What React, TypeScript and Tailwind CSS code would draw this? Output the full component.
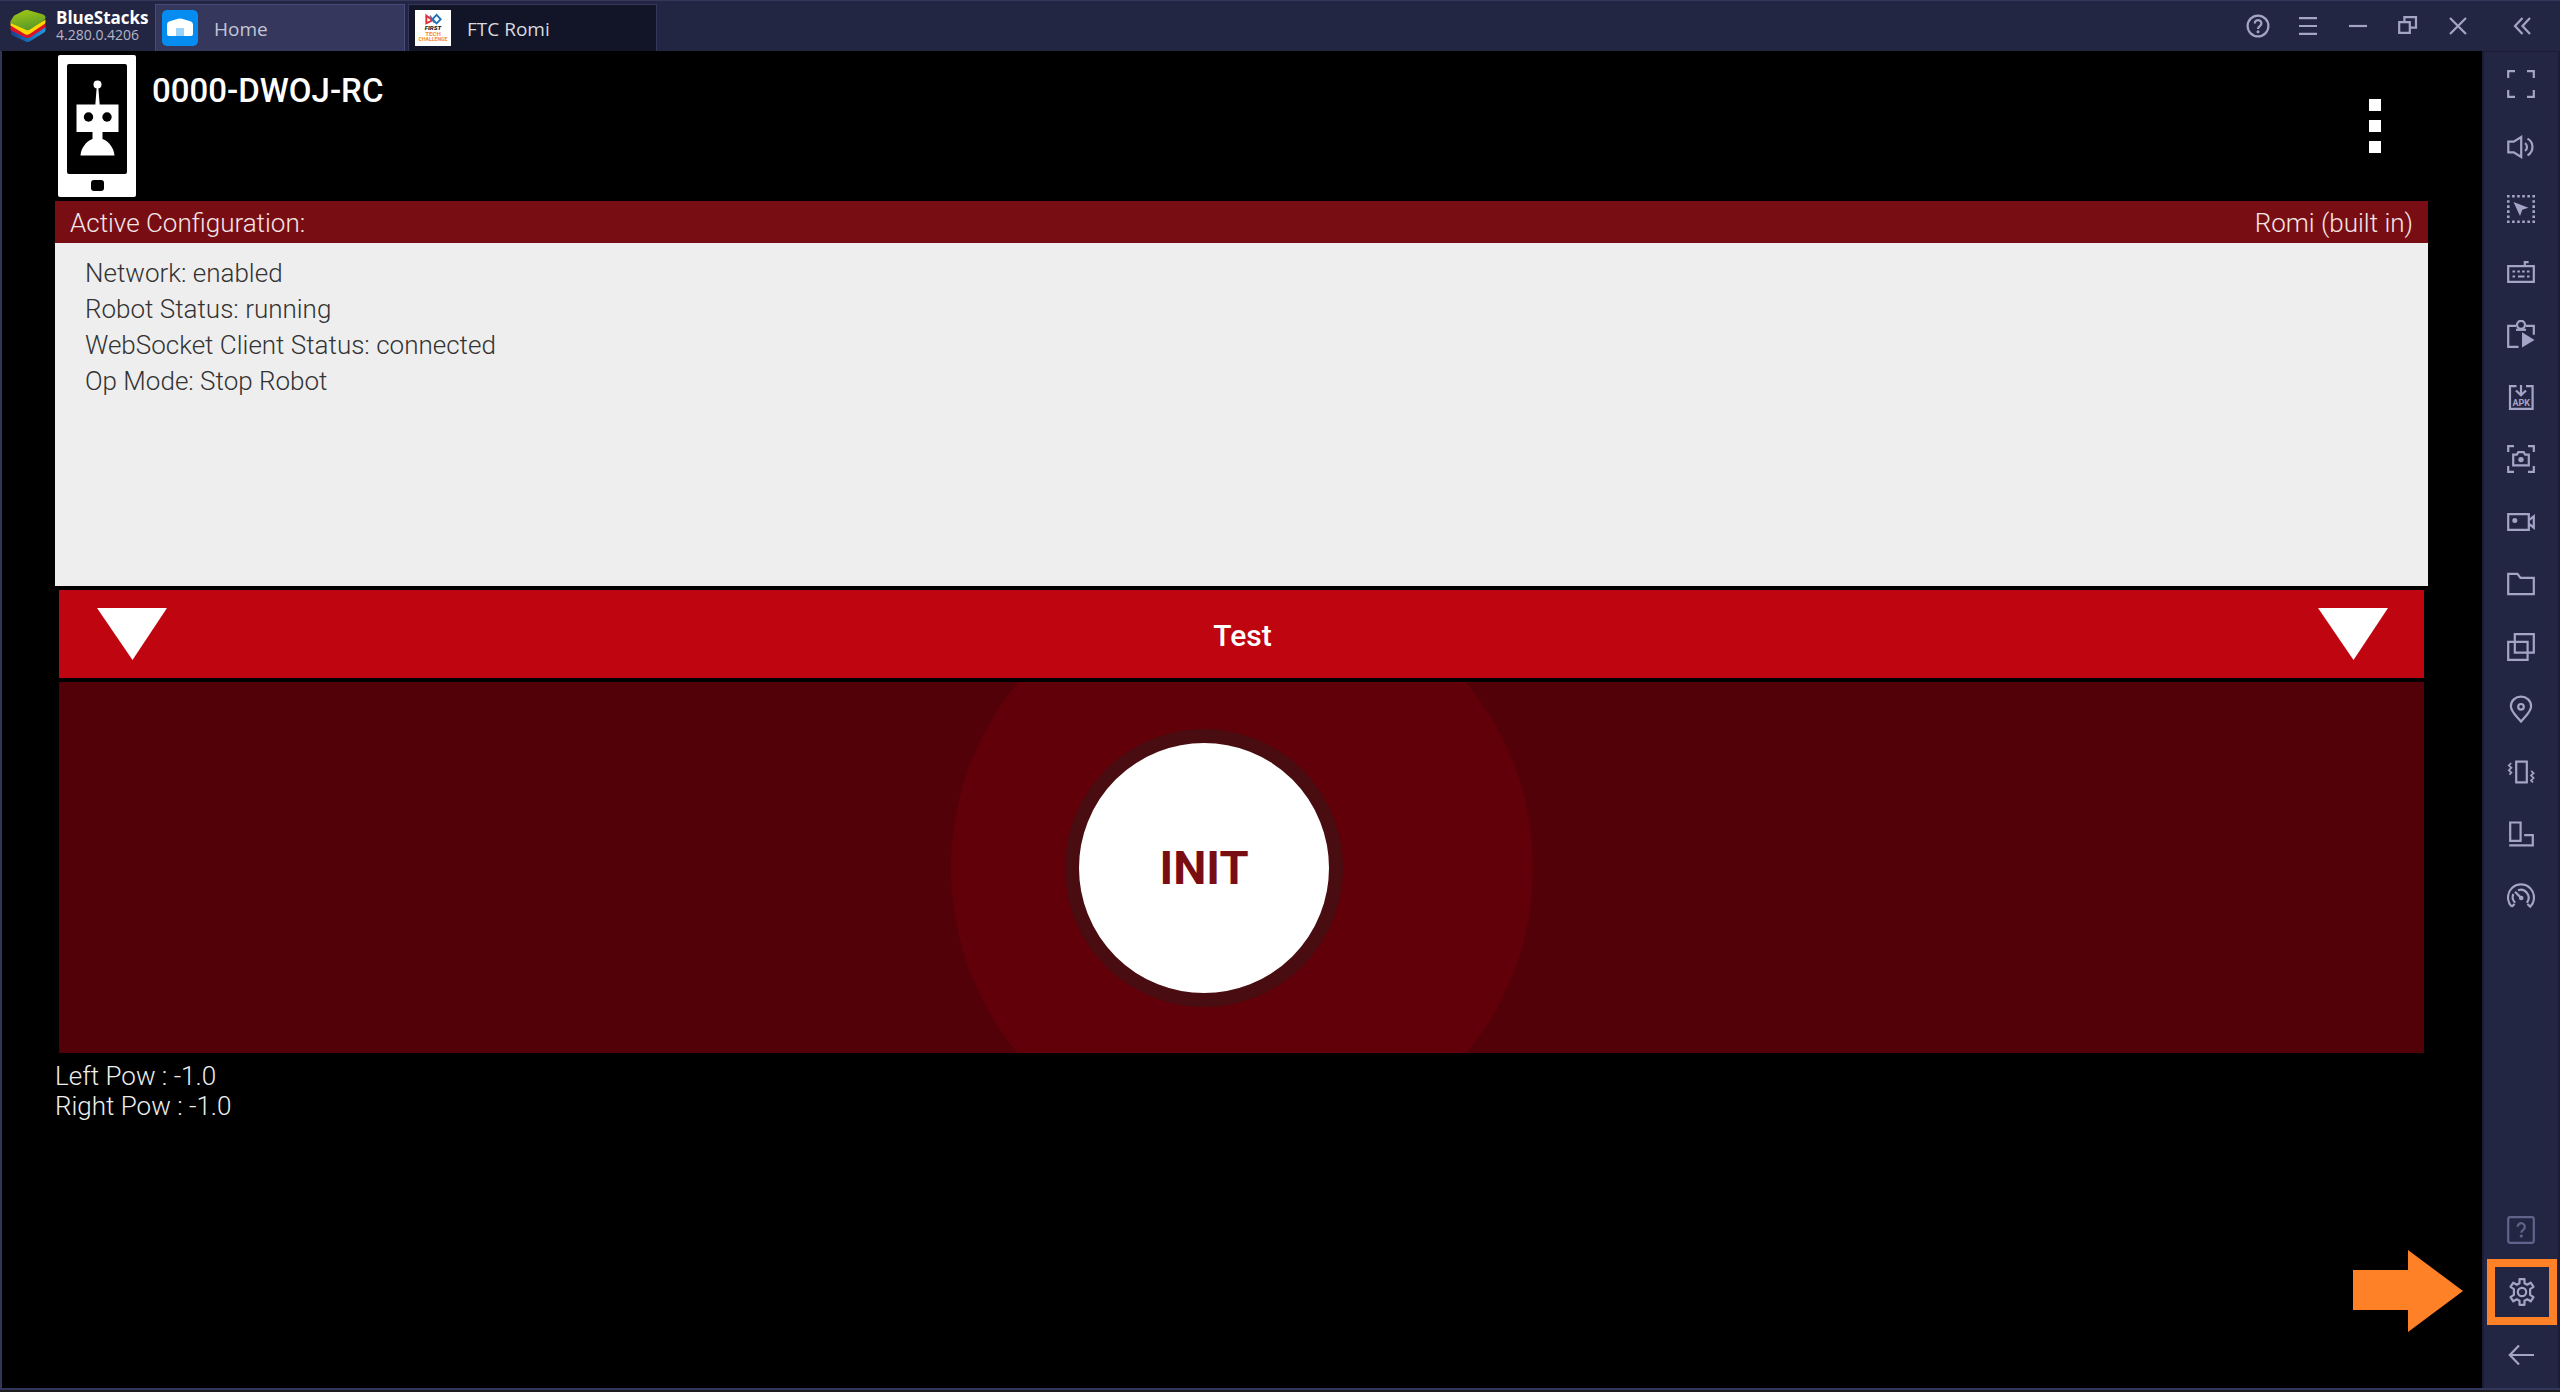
import React from "react";

type IconProps = { children: React.ReactNode; className?: string };

/* 28px line icon used in the tool sidebar */
function ToolIcon({ children, className = "" }: IconProps) {
  return (
    <svg
      viewBox="0 0 28 28"
      className={`h-7 w-7 ${className}`}
      fill="none"
      stroke="currentColor"
      strokeWidth="2.2"
      aria-hidden="true"
    >
      {children}
    </svg>
  );
}

const tools: { label: string; icon: React.ReactNode }[] = [
  {
    label: "Full screen",
    icon: <path d="M1.2 8V1.2H8M20 1.2h6.8V8M26.8 20v6.8H20M8 26.8H1.2V20" />,
  },
  {
    label: "Volume",
    icon: (
      <>
        <path d="M1.3 8.7h5.4L14.2 4v20L6.7 19.3H1.3z" />
        <path d="M18 10.2a4.6 4.6 0 0 1 0 7.6M20.5 5.6a9.6 9.6 0 0 1 0 16.8" />
      </>
    ),
  },
  {
    label: "Lock cursor",
    icon: (
      <>
        <path
          d="M0 1.3h28M0 26.7h28M1.3 5.2v18M26.7 5.2v18"
          strokeDasharray="2.6 2.48"
          strokeWidth="2.6"
        />
        <path d="M6.5 7 21.5 12.7 15.3 14.8 13 21z" fill="currentColor" stroke="none" />
      </>
    ),
  },
  {
    label: "Keyboard controls",
    icon: (
      <>
        <path d="M1.2 8.2h25.6v15.6H1.2zM17.8 8V4.2h3.8" />
        <path d="M5.5 13.5h17" strokeDasharray="2.6 2.2" />
        <path d="M5.5 18.5h2.6M11 18.5h6.5M20 18.5h2.6" />
      </>
    ),
  },
  {
    label: "Macro recorder",
    icon: (
      <>
        <path d="M9 5.8H1.2v21H11.5M19 5.8h7.8v9" />
        <circle cx="14" cy="4.8" r="4" />
        <path d="M9 9.8h10" />
        <path d="M15 12.2 27.5 20 15 27.5z" fill="currentColor" stroke="none" />
      </>
    ),
  },
  {
    label: "Install APK",
    icon: (
      <>
        <path d="M9.5 3.2H3v22.6h22.6V3.2H19M14 2v9.5M9 7.500l5 4.800 5-4.800" />
        <text
          x="14.300"
          y="22.600"
          textAnchor="middle"
          fill="currentColor"
          stroke="none"
          fontFamily="Roboto, sans-serif"
          fontWeight="700"
          fontSize="9"
        >
          APK
        </text>
      </>
    ),
  },
  {
    label: "Screenshot",
    icon: (
      <>
        <path d="M1.2 7V1.2H7M21 1.2h5.8V7M26.8 21v5.8H21M7 26.8H1.2V21" />
        <path d="M6.2 9.7h3.6l1.5-2.5h5.4l1.5 2.5h3.6v10.6H6.2z" />
        <circle cx="14" cy="14.6" r="2.7" fill="currentColor" stroke="none" />
      </>
    ),
  },
  {
    label: "Record screen",
    icon: (
      <>
        <path d="M1.2 6.2h20.6v15.600H1.2zM22 12.100l4.800-3.800v11.400L22 15.900" />
        <circle cx="7.800" cy="12.500" r="2.500" fill="currentColor" stroke="none" />
      </>
    ),
  },
  {
    label: "Media folder",
    icon: <path d="M1.2 3.8h9.3l3 4h13.3v16.4H1.2z" />,
  },
  {
    label: "Instances",
    icon: <path d="M7.8 1.2h19v18.5h-19zM1.2 8.8h19.4v18H1.2z" />,
  },
  {
    label: "Location",
    icon: (
      <>
        <path d="M14 26.5C9.5 20.8 3.9 16.8 3.9 11.2 3.9 5.6 8.4 1.7 14 1.7s10.1 3.9 10.1 9.5c0 5.6-5.6 9.6-10.1 15.3z" />
        <circle cx="14" cy="11.8" r="2.8" />
      </>
    ),
  },
  {
    label: "Shake",
    icon: (
      <>
        <path d="M9.2 3.7h10.6v20.6H9.2z" />
        <path
          d="M4.2 5 1.8 7.4l2.6 2.4-2.6 2.4 2.6 2.4-2 2M24.2 12.8l2.4 2.4-2.6 2.4 2.6 2.4-2.6 2.4 2 2"
          strokeWidth="1.7"
        />
      </>
    ),
  },
  {
    label: "Rotate",
    icon: <path d="M3.2 2.5h10.4v18.4H3.2zM17.2 15.2h8.6v10.1H2.2" />,
  },
  {
    label: "Performance",
    icon: (
      <>
        <path d="M4.8 23.6A13 13 0 1 1 23.2 23.6L20.4 21M4.8 23.6 7.6 21" />
        <path d="M8.2 19.8A8 8 0 0 1 6.3 11M11 7.2a8 8 0 0 1 8.8 12.6" />
        <path d="M8 8.8l5.6 5.6" />
        <circle cx="14.2" cy="15" r="2.3" fill="currentColor" stroke="none" />
      </>
    ),
  },
];

const windowControls: { label: string; icon: React.ReactNode }[] = [
  {
    label: "Help",
    icon: (
      <>
        <circle cx="14" cy="14" r="10.4" />
        <path d="M10.8 11.4a3.3 3.3 0 1 1 5 2.8c-1.2.8-1.8 1.3-1.8 2.8" />
        <circle cx="14" cy="19.7" r="1.5" fill="currentColor" stroke="none" />
      </>
    ),
  },
  { label: "Menu", icon: <path d="M5 6.2h18M5 14h18M5 21.8h18" /> },
  { label: "Minimize", icon: <path d="M5 14h18" /> },
  {
    label: "Restore",
    icon: <path d="M5.2 10.2h10.6v10.6H5.2zM10.4 10V5.2H22v10.4h-6" />,
  },
  { label: "Close", icon: <path d="M6 6l16 16M22 6 6 22" /> },
];

function BlueStacksLogo() {
  return (
    <svg viewBox="0 0 37 33" className="h-8 w-9" aria-hidden="true">
      <defs>
        <linearGradient id="leaf" x1="0" y1="0" x2="0.3" y2="1">
          <stop offset="0" stopColor="#a6cb12" />
          <stop offset="1" stopColor="#5a9a28" />
        </linearGradient>
        <linearGradient id="sea" x1="0" y1="0" x2="1" y2="0">
          <stop offset="0" stopColor="#14418f" />
          <stop offset="1" stopColor="#1c9be0" />
        </linearGradient>
      </defs>
      <path d="M1 20v4c0 1 .5 1.5 1.5 2.200L15 32q3 2 6 0l14.500-9q1-1 1-2v-4L18 28z" fill="url(#sea)" />
      <path d="M.5 16v3.500q0 1 1 2L15 28q3 2 6 0l14.500-9.500q1-.8 1-1.800V13L18 24z" fill="#d8122a" />
      <path d="M.5 13v3l14 8.500q3 2 6 0l15-10q1-.8 1-2V10L18 20z" fill="#ffd800" />
      <path d="M4 6 14 .8q3-1.500 6-.3l13.500 3.800q2.500.8 3 2.700.5 2-1.500 3.500l-14 9.300q-3 2-6 0L1.500 14Q0 13 .5 11.500z" fill="url(#leaf)" />
    </svg>
  );
}

function HomeBadge() {
  return (
    <svg viewBox="0 0 36 36" className="size-9" aria-hidden="true">
      <rect width="36" height="36" rx="5" fill="#058cf0" />
      <path d="M5 14.500q0-2 2-2.900L16 8.800q2-.8 4 0l9 2.800q2 .9 2 2.900V24q0 2-2 2H7q-2 0-2-2z" fill="#fff" />
      <path d="M14 18h8v8h-8z" fill="#9bd2f9" />
    </svg>
  );
}

function FtcBadge() {
  return (
    <svg viewBox="0 0 35 35" className="size-9" aria-hidden="true">
      <path d="M0 0h35v35H0z" fill="#fff" />
      <path d="M11 5.500v7.500l6-3z" fill="none" stroke="#e02a36" strokeWidth="1.800" />
      <path d="M14.500 5.500 19 12.500" fill="none" stroke="#5f6a9c" strokeWidth="1.600" />
      <path d="M21 4.800l4 4.200-4 4-4-4z" fill="none" stroke="#1f74ba" strokeWidth="1.800" />
      <g textAnchor="middle" fontFamily="Roboto, sans-serif" fontWeight="900">
        <text x="17.500" y="19.500" fontSize="6" fontStyle="italic" fill="#1b1b1b">FIRST</text>
        <text x="17.500" y="25" fontSize="6" fontWeight="700" fill="#f58a35">TECH</text>
        <text x="17.500" y="30" fontSize="5" fontWeight="700" fill="#f58a35">CHALLENGE</text>
      </g>
    </svg>
  );
}

function RobotPhone() {
  return (
    <svg viewBox="0 0 78 142" className="h-[142px] w-[78px]" aria-hidden="true">
      <rect width="78" height="142" rx="2" fill="#fff" />
      <rect x="9" y="9" width="60" height="110" rx="2" fill="#000" />
      <rect x="33" y="125" width="13" height="11" rx="3" fill="#000" />
      <g fill="#fff">
        <circle cx="39.500" cy="29.500" r="4" />
        <path d="M38.800 31h1.400l1.500 19h-4.400zM18.500 49.500h42V77h-16v7C51 86.500 56 93 56.500 100.500h-34C23 93 28 86.500 34.500 84v-7h-16z" />
      </g>
      <circle cx="30.500" cy="62" r="4.700" fill="#000" />
      <circle cx="49" cy="62" r="4.700" fill="#000" />
    </svg>
  );
}

function Triangle() {
  return (
    <svg viewBox="0 0 70 52" className="h-[52px] w-[70px]" aria-hidden="true">
      <path d="M0 0h70L35.500 52z" fill="#fff" />
    </svg>
  );
}

function TitleBar() {
  return (
    <header className="flex h-[51px] shrink-0 border-t border-[#35375c] bg-[#232642] font-['Open_Sans','Noto_Sans',sans-serif] text-[#a3a4c6]">
      <div className="flex w-[155px] items-center gap-2.5 pl-2.5">
        <BlueStacksLogo />
        <div className="flex flex-col">
          <span className="text-[17px] leading-[18px] font-bold text-white">BlueStacks</span>
          <span className="text-[14px] leading-4 text-[#b4b5c8]">4.280.0.4206</span>
        </div>
      </div>
      <nav className="flex gap-[3px] pt-[3px]">
        <button className="flex w-[250px] items-center gap-4 border-x border-t border-[#474a7a] bg-[#35375c] pl-1.5 text-[19px] text-[#c4c5d6]">
          <HomeBadge />
          <span className="pt-0.5">Home</span>
        </button>
        <button className="flex w-[249px] items-center gap-4 border-x border-t border-[#35375c] bg-[#121428] pl-1.5 text-[19px] text-[#d9d9df]">
          <FtcBadge />
          <span className="pt-0.5">FTC Romi</span>
        </button>
      </nav>
      <div className="ml-auto flex">
        {windowControls.map((c) => (
          <button key={c.label} aria-label={c.label} className="flex w-[50px] items-center justify-center">
            <ToolIcon>{c.icon}</ToolIcon>
          </button>
        ))}
        <button aria-label="Collapse sidebar" className="flex w-[77px] items-center justify-center">
          <ToolIcon>
            <path d="M14.500 6 7 14l7.500 8M22 6l-7.500 8 7.500 8" />
          </ToolIcon>
        </button>
      </div>
    </header>
  );
}

function Sidebar() {
  return (
    <aside className="flex w-[78px] shrink-0 flex-col justify-between border-x-2 border-t border-[#1b1d36] bg-[#232642] pt-px pb-0.5 text-[#a3a4c6]">
      <div className="flex h-[875px] flex-col">
        {tools.map((t) => (
          <button key={t.label} aria-label={t.label} className="flex flex-1 items-center justify-center">
            <ToolIcon>{t.icon}</ToolIcon>
          </button>
        ))}
      </div>
      <div className="flex h-[188px] flex-col">
        <button aria-label="Hints" className="flex flex-1 items-center justify-center text-[#62638a]">
          <ToolIcon>
            <rect x="1.200" y="1.200" width="25.600" height="25.600" rx="2" />
            <path d="M10.600 10.800a3.600 3.600 0 1 1 5.600 3c-1.300.9-1.900 1.400-1.900 3" />
            <circle cx="14.300" cy="20" r="1.600" fill="currentColor" stroke="none" />
          </ToolIcon>
        </button>
        <button
          aria-label="Settings"
          className="-my-0.5 mr-px ml-[3px] flex h-[66px] items-center justify-center border-8 border-[#ff8127]"
        >
          <ToolIcon>
            <path
              d="M11.500 1.200h5v4l2.700 1.500 3.500-2 2.800 4.200-3.400 2.200v5.800l3.400 2.200-2.800 4.200-3.500-2-2.700 1.500v4h-5v-4l-2.700-1.500-3.500 2-2.800-4.200 3.400-2.200v-5.800L2.500 8.900l2.800-4.200 3.500 2 2.700-1.500z"
              strokeLinejoin="round"
            />
            <circle cx="14" cy="14" r="4.200" />
          </ToolIcon>
        </button>
        <button aria-label="Back" className="flex flex-1 items-center justify-center">
          <ToolIcon>
            <path d="M27 14H3M12 4.500 2.800 14l9.200 9.500" />
          </ToolIcon>
        </button>
      </div>
    </aside>
  );
}

function RobotController() {
  return (
    <main className="relative flex-1 bg-black pr-[54px] pl-[53px] font-[Roboto,sans-serif]">
      <section className="flex h-[150px] items-start pt-1">
        <div className="ml-[3px]">
          <RobotPhone />
        </div>
        <h1 className="mt-4 ml-4 text-[33px] leading-10 font-medium text-white">0000-DWOJ-RC</h1>
        <button aria-label="More options" className="mt-11 mr-[47px] ml-auto flex flex-col gap-[9px]">
          <span className="size-3 bg-white" />
          <span className="size-3 bg-white" />
          <span className="size-3 bg-white" />
        </button>
      </section>

      <div className="flex h-[42px] items-center justify-between bg-[#780d13] px-[15px] pt-0.5 text-[26px] font-light text-[#f3e6e6]">
        <span>Active Configuration:</span>
        <span>Romi (built in)</span>
      </div>

      <div className="min-h-[343px] bg-[#eee] px-[30px] pt-3 text-[26px] leading-9 font-light text-[#333]">
        <p>Network: enabled</p>
        <p>Robot Status: running</p>
        <p>WebSocket Client Status: connected</p>
        <p>Op Mode: Stop Robot</p>
      </div>

      <div className="mx-1 mt-1 flex h-[88px] items-center justify-between bg-[#bf050f] pr-9 pl-[38px]">
        <button aria-label="Autonomous op modes">
          <Triangle />
        </button>
        <span className="pt-0.5 text-[30px] font-medium text-white">Test</span>
        <button aria-label="TeleOp op modes">
          <Triangle />
        </button>
      </div>

      <div className="relative mx-1 mt-1 flex h-[371px] items-center justify-center overflow-hidden bg-[#520108] pr-[75px]">
        <div className="absolute top-1/2 left-1/2 size-[582px] -translate-1/2 rounded-full bg-[#610008]" />
        <button className="relative size-[278px] rounded-full border-[14px] border-[#480c11] bg-white pt-0.5 text-[47px] font-bold text-[#780d13]">
          INIT
        </button>
      </div>

      <div className="pt-2 text-[26px] leading-[30px] font-light text-[#eee]">
        <p>Left Pow : -1.0</p>
        <p>Right Pow : -1.0</p>
      </div>

      <svg
        viewBox="0 0 110 82"
        className="absolute right-[19px] bottom-14 h-[82px] w-[110px]"
        aria-hidden="true"
      >
        <path d="M0 20h55V0l55 41-55 41V60H0z" fill="#ff8127" />
      </svg>
    </main>
  );
}

export default function App() {
  return (
    <div className="flex h-screen flex-col bg-[#1c1c1e]">
      <TitleBar />
      <div className="mb-0.5 flex min-h-0 flex-1 border-b-2 border-l-2 border-[#33365c] bg-black">
        <RobotController />
        <Sidebar />
      </div>
    </div>
  );
}
